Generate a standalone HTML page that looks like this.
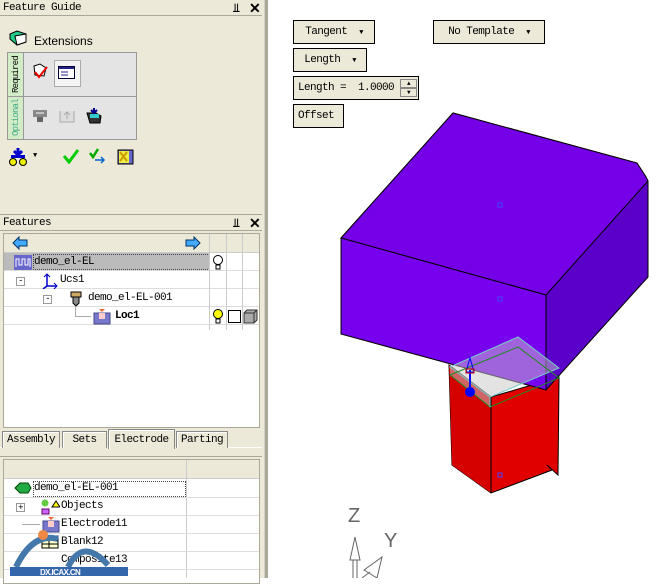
<!DOCTYPE html>
<html><head><style>
*{margin:0;padding:0;box-sizing:border-box}
body{width:666px;height:578px;overflow:hidden;background:#fff;font-family:"Liberation Mono","WenQuanYi Zen Hei",monospace;font-size:11px;letter-spacing:-0.6px;position:relative;color:#000}
.a{position:absolute}
.panel{left:0;top:0;width:265px;height:578px;background:#ece9d8}
.title{left:0;width:262px;height:16px;border-bottom:1px solid #aca899;padding-left:3px;line-height:16px;background:#ece9d8}
.grid{background:#fff;border:1px solid #aca899}
.btn{background:#ece9d8;border:1px solid #000;line-height:22px;text-align:center}
.tab{top:431px;height:17px;border:1px solid #888;border-bottom:none;background:#ece9d8;line-height:16px;text-align:center;box-shadow:inset 1px 1px #fff}
</style></head><body>
<div class="a panel"></div>
<div class="a" style="left:264px;top:0;width:4px;height:578px;background:#aca899;border-left:1px solid #d4d0c8"></div>
<!-- Feature guide -->
<div class="a title" style="top:0">Feature Guide</div>
<div class="a" style="left:233px;top:1px;font-size:12px;font-weight:bold;font-family:'Liberation Sans',sans-serif">&#x2AEB;</div>
<div class="a" style="left:249px;top:0px;font-size:14px;font-weight:bold;font-family:'Liberation Sans',sans-serif">✕</div>
<svg class="a" style="left:9px;top:30px" width="18" height="16"><path d="M1 4 L8 1 L17 4 L17 12 L8 15 L1 9 Z" fill="#2c8" stroke="#000"/><path d="M6 6 L17 4 L17 12 L8 15 Z" fill="#fff" stroke="#000"/></svg>
<div class="a" style="left:34px;top:34px;font-family:'Liberation Sans',sans-serif;font-size:12px;letter-spacing:0">Extensions</div>
<div class="a" style="left:7px;top:52px;width:130px;height:88px;border:1px solid #999;background:#e4e4e4"></div>
<div class="a" style="left:8px;top:53px;width:16px;height:86px;background:#d2ecc8;border-right:1px solid #999"></div>
<div class="a" style="left:8px;top:96px;width:128px;height:1px;background:#999"></div>
<div class="a" style="left:8px;top:54px;width:16px;height:42px;writing-mode:vertical-rl;transform:rotate(180deg);font-size:9px;letter-spacing:-0.8px;text-align:center;line-height:16px;color:#000">Required</div>
<div class="a" style="left:8px;top:97px;width:16px;height:42px;writing-mode:vertical-rl;transform:rotate(180deg);font-size:9px;letter-spacing:-0.8px;text-align:center;line-height:16px;color:#4a8">Optional</div>
<svg class="a" style="left:32px;top:62px" width="18" height="18"><path d="M2 4 L8 2 L14 6 L12 14 L3 13Z" fill="#fff" stroke="#000"/><path d="M3 10 L7 15 L15 5" stroke="#e00" stroke-width="2" fill="none"/></svg>
<div class="a" style="left:54px;top:60px;width:27px;height:27px;border:1px solid #aaa;background:#f4f4f4"></div>
<svg class="a" style="left:58px;top:66px" width="18" height="14"><rect x="0.5" y="0.5" width="16" height="12" fill="#fff" stroke="#003"/><rect x="1" y="1" width="15" height="2" fill="#228"/><path d="M3 6h7M3 9h7" stroke="#228"/></svg>
<svg class="a" style="left:32px;top:108px" width="16" height="16"><rect x="1" y="2" width="14" height="7" fill="#888"/><rect x="5" y="9" width="6" height="5" fill="#666"/><path d="M4 5h8" stroke="#fff"/></svg>
<svg class="a" style="left:59px;top:108px" width="16" height="16"><path d="M1 3 L1 14 L15 14 L15 3" fill="#ddd" stroke="#aaa"/><path d="M8 11V4M5 7l3-3 3 3" stroke="#aaa" fill="none"/></svg>
<svg class="a" style="left:86px;top:107px" width="16" height="18"><path d="M1 6 L10 6 L15 9 L14 16 L4 16Z" fill="#333" stroke="#000"/><path d="M4 7h9v4H4z" fill="#3cc"/><path d="M8 1v5M5 3l3 3 3-3" stroke="#008" stroke-width="2" fill="none"/></svg>
<svg class="a" style="left:8px;top:147px" width="20" height="20"><path d="M10 1v6M6 4l4 4 4-4" stroke="#00c" stroke-width="3" fill="none"/><rect x="3" y="8" width="14" height="3" fill="#00c"/><circle cx="5" cy="15" r="3.5" fill="#ee0" stroke="#000"/><circle cx="15" cy="15" r="3.5" fill="#ee0" stroke="#000"/></svg>
<div class="a" style="left:33px;top:152px;font-size:7px">▼</div>
<svg class="a" style="left:62px;top:148px" width="18" height="16"><path d="M2 8 L7 14 L16 2" stroke="#0c0" stroke-width="3" fill="none"/></svg>
<svg class="a" style="left:89px;top:147px" width="18" height="18"><path d="M1 6 L4 10 L9 2" stroke="#0a0" stroke-width="2.5" fill="none"/><path d="M6 13h9M12 10l3 3-3 3" stroke="#06c" stroke-width="1.5" fill="none"/></svg>
<svg class="a" style="left:117px;top:147px" width="18" height="18"><rect x="1" y="3" width="15" height="14" fill="#66c" stroke="#000"/><rect x="2" y="4" width="10" height="12" fill="#ee4"/><path d="M3 5l7 9M10 5l-7 9" stroke="#c90" stroke-width="2"/></svg>
<!-- Features -->
<div class="a" style="left:0;top:214px;width:262px;height:1px;background:#aca899"></div>
<div class="a title" style="top:215px">Features</div>
<div class="a" style="left:233px;top:216px;font-size:12px;font-weight:bold;font-family:'Liberation Sans',sans-serif">&#x2AEB;</div>
<div class="a" style="left:249px;top:215px;font-size:14px;font-weight:bold;font-family:'Liberation Sans',sans-serif">✕</div>
<div class="a grid" style="left:3px;top:233px;width:257px;height:195px"></div>
<div class="a" style="left:4px;top:234px;width:255px;height:19px;background:#ece9d8;border-bottom:1px solid #ccc"></div>
<svg class="a" style="left:12px;top:236px" width="16" height="14"><path d="M1 7 L7 1 V4 H15 V10 H7 V13Z" fill="#4af" stroke="#036"/></svg>
<svg class="a" style="left:185px;top:236px" width="16" height="14"><path d="M15 7 L9 1 V4 H1 V10 H9 V13Z" fill="#4af" stroke="#036"/></svg>
<div class="a" style="left:4px;top:253px;width:205px;height:18px;background:#bbb"></div>
<div class="a" style="left:33px;top:254px;width:175px;height:16px;border:1px dotted #444;border-right:none"></div>
<div class="a" style="left:4px;top:270px;width:255px;height:1px;background:#ddd"></div>
<div class="a" style="left:4px;top:288px;width:255px;height:1px;background:#ddd"></div>
<div class="a" style="left:4px;top:306px;width:255px;height:1px;background:#ddd"></div>
<div class="a" style="left:4px;top:324px;width:255px;height:1px;background:#ddd"></div>
<div class="a" style="left:209px;top:234px;width:1px;height:96px;background:#ccc"></div>
<div class="a" style="left:226px;top:234px;width:1px;height:96px;background:#ccc"></div>
<div class="a" style="left:242px;top:234px;width:1px;height:96px;background:#ccc"></div>
<svg class="a" style="left:14px;top:255px" width="18" height="15"><rect width="18" height="15" fill="#66c"/><path d="M2 12V4h3v6h3V4h3v6h3V4h2v8" stroke="#fff" fill="none"/></svg>
<div class="a" style="left:34px;top:256px">demo_el-EL</div>
<svg class="a" style="left:212px;top:255px" width="12" height="15"><circle cx="6" cy="5" r="4.5" fill="#fff" stroke="#000"/><rect x="4" y="10" width="4" height="4" fill="#fff" stroke="#000"/></svg>
<div class="a" style="left:16px;top:277px;width:9px;height:9px;border:1px solid #999;background:#fff;font-size:9px;line-height:6px;text-align:center">-</div>
<svg class="a" style="left:42px;top:273px" width="16" height="16"><path d="M5 1v12h10M5 13l-4 3" stroke="#00c" stroke-width="1.5" fill="none"/><path d="M2 4l3-3 3 3M12 10l3 3-3 3" stroke="#00c" fill="none"/></svg>
<div class="a" style="left:60px;top:274px">Ucs1</div>
<div class="a" style="left:43px;top:295px;width:9px;height:9px;border:1px solid #999;background:#fff;font-size:9px;line-height:6px;text-align:center">-</div>
<svg class="a" style="left:70px;top:291px" width="12" height="16"><rect x="1" y="1" width="10" height="5" fill="#ca6" stroke="#000"/><path d="M3 6h6v6l-3 3-3-3z" fill="#888" stroke="#000"/></svg>
<div class="a" style="left:88px;top:292px">demo_el-EL-001</div>
<div class="a" style="left:75px;top:307px;width:1px;height:9px;background:#aaa"></div>
<div class="a" style="left:75px;top:316px;width:16px;height:1px;background:#aaa"></div>
<svg class="a" style="left:93px;top:308px" width="18" height="17"><path d="M6 1h6l-3 3z" fill="#e63"/><rect x="1" y="5" width="16" height="11" fill="#77c" stroke="#448"/><rect x="6" y="5" width="6" height="6" fill="#fcc"/></svg>
<div class="a" style="left:115px;top:310px;font-weight:bold">Loc1</div>
<svg class="a" style="left:212px;top:309px" width="12" height="15"><circle cx="6" cy="5" r="4.5" fill="#ff0" stroke="#000"/><rect x="4" y="10" width="4" height="4" fill="#fff" stroke="#000"/></svg>
<div class="a" style="left:228px;top:310px;width:13px;height:13px;border:1px solid #000;background:#fff"></div>
<svg class="a" style="left:243px;top:309px" width="15" height="15"><path d="M1 4l3-3h10v10l-3 3H1z" fill="#aaa" stroke="#333"/><path d="M1 4h10v10M11 4l3-3" stroke="#333" fill="none"/></svg>
<!-- tabs -->
<div class="a" style="left:0;top:447px;width:262px;height:1px;background:#fff"></div>
<div class="a tab" style="left:2px;width:58px">Assembly</div>
<div class="a tab" style="left:62px;width:45px">Sets</div>
<div class="a tab" style="left:108px;width:67px;top:429px;height:20px;line-height:20px">Electrode</div>
<div class="a tab" style="left:176px;width:52px">Parting</div>
<div class="a" style="left:0;top:456px;width:262px;height:1px;background:#aca899"></div>
<div class="a grid" style="left:3px;top:459px;width:257px;height:125px"></div>
<div class="a" style="left:4px;top:460px;width:255px;height:19px;background:#ece9d8;border-bottom:1px solid #ccc"></div>
<div class="a" style="left:186px;top:460px;width:1px;height:118px;background:#ccc"></div>
<div class="a" style="left:4px;top:497px;width:255px;height:1px;background:#ddd"></div>
<div class="a" style="left:4px;top:515px;width:255px;height:1px;background:#ddd"></div>
<div class="a" style="left:4px;top:533px;width:255px;height:1px;background:#ddd"></div>
<div class="a" style="left:4px;top:551px;width:255px;height:1px;background:#ddd"></div>
<div class="a" style="left:4px;top:569px;width:255px;height:1px;background:#ddd"></div>
<svg class="a" style="left:14px;top:482px" width="18" height="12"><path d="M1 6l5-5h8l3 5-3 5H6z" fill="#2a4" stroke="#040"/></svg>
<div class="a" style="left:33px;top:481px;width:153px;height:16px;border:1px dotted #444"></div>
<div class="a" style="left:34px;top:482px">demo_el-EL-001</div>
<div class="a" style="left:16px;top:503px;width:9px;height:9px;border:1px solid #999;background:#fff;font-size:9px;line-height:8px;text-align:center">+</div>
<svg class="a" style="left:40px;top:499px" width="20" height="17"><circle cx="5" cy="4" r="3.5" fill="#6c4"/><path d="M12 8l4-6 4 6z" fill="#ff0" stroke="#000"/><rect x="2" y="10" width="7" height="5" fill="#c6f" stroke="#606"/></svg>
<div class="a" style="left:61px;top:500px">Objects</div>
<div class="a" style="left:22px;top:524px;width:18px;height:1px;background:#aaa"></div>
<svg class="a" style="left:42px;top:516px" width="18" height="17"><path d="M6 1h6l-3 3z" fill="#e63"/><rect x="1" y="5" width="16" height="11" fill="#77c" stroke="#448"/><rect x="6" y="5" width="6" height="6" fill="#fcc"/></svg>
<div class="a" style="left:61px;top:518px">Electrode11</div>
<svg class="a" style="left:41px;top:534px" width="18" height="16"><rect x="1" y="2" width="16" height="12" fill="#ffc" stroke="#000"/><path d="M1 6h16M1 10h16M8 2v12" stroke="#000"/></svg>
<div class="a" style="left:61px;top:536px">Blank12</div>
<div class="a" style="left:61px;top:554px">Composite13</div>
<!-- watermark -->
<svg class="a" style="left:8px;top:527px" width="120" height="51"><path d="M8 40 Q25 5 50 12" stroke="#47a" stroke-width="6" fill="none"/><path d="M60 40 Q75 10 100 38" stroke="#47a" stroke-width="6" fill="none"/><circle cx="35" cy="8" r="5" fill="#e84"/><rect x="2" y="40" width="118" height="9" fill="#36a"/><text x="32" y="48" font-family="Liberation Sans" font-size="8" font-weight="bold" fill="#fff">DX.ICAX.CN</text></svg>
<!-- viewport buttons -->
<div class="a btn" style="left:293px;top:20px;width:82px;height:24px">Tangent &nbsp;<span style="font-size:7px">▼</span></div>
<div class="a btn" style="left:433px;top:20px;width:112px;height:24px">No Template &nbsp;<span style="font-size:7px">▼</span></div>
<div class="a btn" style="left:293px;top:48px;width:74px;height:24px">Length &nbsp;<span style="font-size:7px">▼</span></div>
<div class="a btn" style="left:293px;top:76px;width:126px;height:24px;text-align:left;padding-left:4px">Length = &nbsp;1.0000</div>
<div class="a" style="left:400px;top:79px;width:17px;height:9px;border:1px solid #888;background:#ece9d8;font-size:6px;line-height:7px;text-align:center">▲</div>
<div class="a" style="left:400px;top:88px;width:17px;height:9px;border:1px solid #888;background:#ece9d8;font-size:6px;line-height:7px;text-align:center">▼</div>
<div class="a btn" style="left:293px;top:104px;width:51px;height:24px;text-align:left;padding-left:4px">Offset</div>
<!-- 3D -->
<svg class="a" style="left:0;top:0" width="666" height="578">
<polygon points="449,365 452,465 491,493 552,470 547,465 558,475 559,377 491,397" fill="#e00000" stroke="#000"/>
<polygon points="449,365 491,397 491,493 452,465" fill="#d50000"/>
<line x1="491" y1="397" x2="491" y2="493" stroke="#000"/>
<polygon points="341,238 453,113 637,163 646,177 648,181 648,277 546,390" fill="#5a00c8" stroke="#000"/>
<polygon points="341,238 453,113 637,163 646,177 648,181 546,295" fill="#7500e8" stroke="#000"/>
<polygon points="341,238 546,295 546,390 341,334" fill="#7700ee" stroke="#000"/>
<polygon points="450,367 518,337 559,368 490,397 490,407 450,375" fill="rgba(200,200,200,0.5)"/>
<polygon points="450,367 518,337 559,368 490,397" fill="none" stroke="#7cc" />
<polygon points="450,375 518,347 559,378 490,407" fill="none" stroke="#282"/>
<line x1="490" y1="397" x2="490" y2="407" stroke="#7cc"/>
<line x1="470" y1="370" x2="470" y2="388" stroke="#00f" stroke-width="2"/>
<path d="M466 372 L470 358 L474 372 Z" fill="none" stroke="#00f"/>
<rect x="466" y="369" width="8" height="4" fill="none" stroke="#c00"/>
<circle cx="470" cy="392" r="5" fill="#00f"/>
<rect x="498" y="203" width="4" height="4" fill="none" stroke="#44f"/>
<rect x="498" y="297" width="4" height="4" fill="none" stroke="#44f"/>
<rect x="498" y="473" width="4" height="4" fill="none" stroke="#44f"/>
<text x="348" y="522" font-family="Liberation Sans" font-size="20" fill="#666">Z</text>
<text x="384" y="547" font-family="Liberation Sans" font-size="20" fill="#666">Y</text>
<path d="M350 560 L355 537 L360 560 Z M353 560 V578 M357 560 V578" fill="none" stroke="#666"/>
<path d="M364 570 L382 557 L377 578 Z M362 578 L370 572" fill="none" stroke="#666"/>
</svg>
</body></html>
